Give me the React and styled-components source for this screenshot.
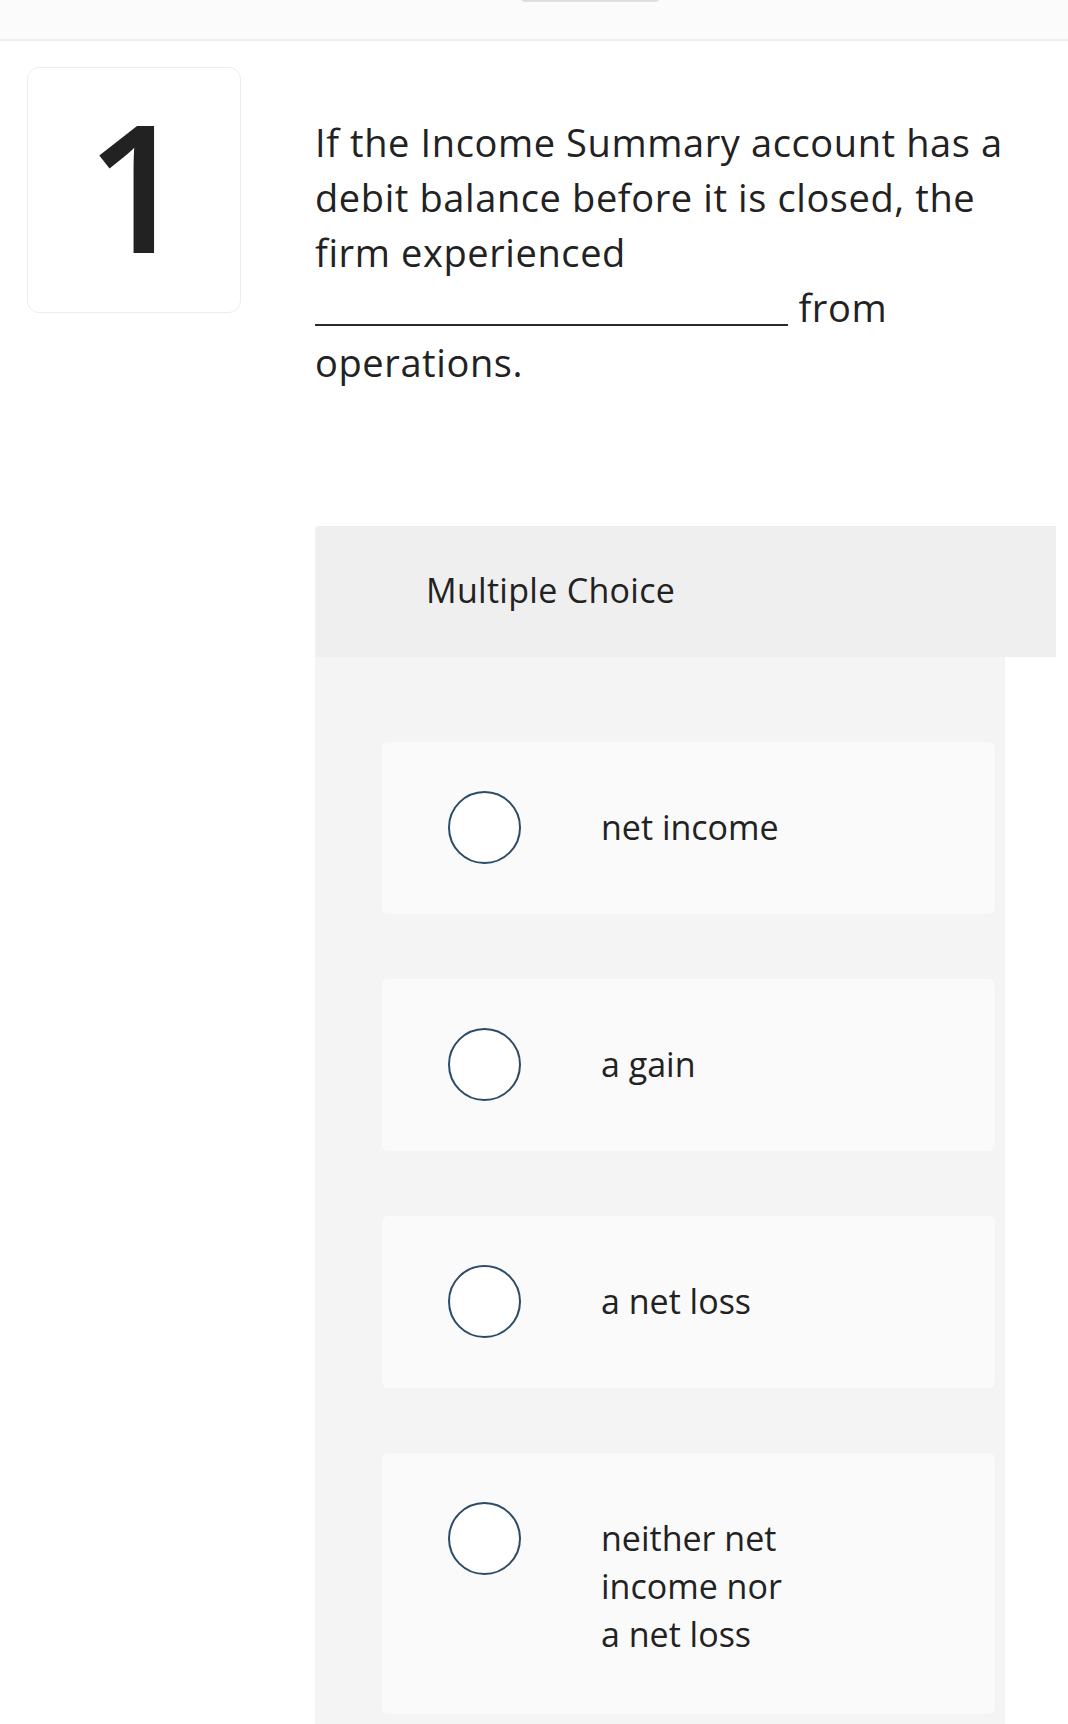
import React from "react";
import styled, { createGlobalStyle } from "styled-components";

const GlobalStyle = createGlobalStyle`
  html, body {
    margin: 0;
    padding: 0;
    background: #ffffff;
  }
  body {
    font-family: "Open Sans", "Liberation Sans", sans-serif;
    color: #222222;
  }
  * { box-sizing: border-box; }
`;

const Page = styled.div`
  width: 1068px;
  min-height: 1724px;
  overflow: hidden;
  background: #ffffff;
`;

const TopBar = styled.div`
  height: 41px;
  background: #fbfbfb;
  border-bottom: 2px solid #efefef;
  display: flex;
  align-items: flex-start;
  overflow: hidden;
`;

const Handle = styled.div`
  margin-left: 520px;
  margin-top: -8px;
  width: 140px;
  height: 10px;
  border-radius: 6px;
  background: #dedede;
`;

const Main = styled.div`
  display: flex;
  align-items: flex-start;
  padding: 26px 12px 0 27px;
`;

const NumberCard = styled.div`
  flex: none;
  width: 214px;
  height: 246px;
  border: 1px solid #ececec;
  border-radius: 12px;
  display: flex;
  align-items: center;
  justify-content: center;
`;

const Digit = styled.span`
  font-size: 178px;
  font-weight: 600;
  line-height: 1;
  color: #222222;
  margin-bottom: 12px;
  margin-left: 6px;
`;

const Column = styled.div`
  flex: 1;
  margin-left: 74px;
  display: flex;
  flex-direction: column;
`;

const Question = styled.p`
  margin: 48px 0 0 0;
  max-width: 700px;
  font-size: 38px;
  line-height: 55px;
  letter-spacing: 0.6px;
  font-weight: 400;
  color: #222222;
`;

const Blank = styled.span`
  display: inline-block;
  width: 473px;
  height: 2px;
  background: #2a2a2a;
  vertical-align: -4px;
`;

const ChoiceSection = styled.section`
  margin-top: 136px;
  display: flex;
  flex-direction: column;
`;

const ChoiceHeader = styled.div`
  height: 131px;
  background: #efefef;
  border-radius: 4px 0 0 0;
  display: flex;
  align-items: center;
  padding-left: 111px;
  padding-bottom: 4px;
  font-size: 34px;
  letter-spacing: 0.3px;
  color: #222222;
`;

const ChoiceBody = styled.div`
  width: 690px;
  background: #f4f4f4;
  padding: 85px 10px 60px 67px;
  display: flex;
  flex-direction: column;
  gap: 65px;
`;

const Option = styled.label`
  display: flex;
  align-items: flex-start;
  background: #fafafa;
  border-radius: 6px;
  padding: 49px 20px 50px 66px;
  cursor: pointer;
`;

const Radio = styled.span`
  flex: none;
  width: 73px;
  height: 73px;
  border-radius: 50%;
  border: 2px solid #2b4b66;
  background: #ffffff;
`;

const OptionText = styled.span`
  margin: 12px 0 6px 80px;
  width: 195px;
  font-size: 34px;
  line-height: 48px;
  color: #222222;
`;

const options = ["net income", "a gain", "a net loss", "neither net income nor a net loss"];

export default function App() {
  return (
    <Page>
      <GlobalStyle />
      <TopBar>
        <Handle />
      </TopBar>
      <Main>
        <NumberCard>
          <Digit>1</Digit>
        </NumberCard>
        <Column>
          <Question>
            If the Income Summary account has a debit balance before it is closed, the firm experienced{" "}
            <Blank /> from operations.
          </Question>
          <ChoiceSection>
            <ChoiceHeader>Multiple Choice</ChoiceHeader>
            <ChoiceBody>
              {options.map((o) => (
                <Option key={o}>
                  <Radio />
                  <OptionText>{o}</OptionText>
                </Option>
              ))}
            </ChoiceBody>
          </ChoiceSection>
        </Column>
      </Main>
    </Page>
  );
}
